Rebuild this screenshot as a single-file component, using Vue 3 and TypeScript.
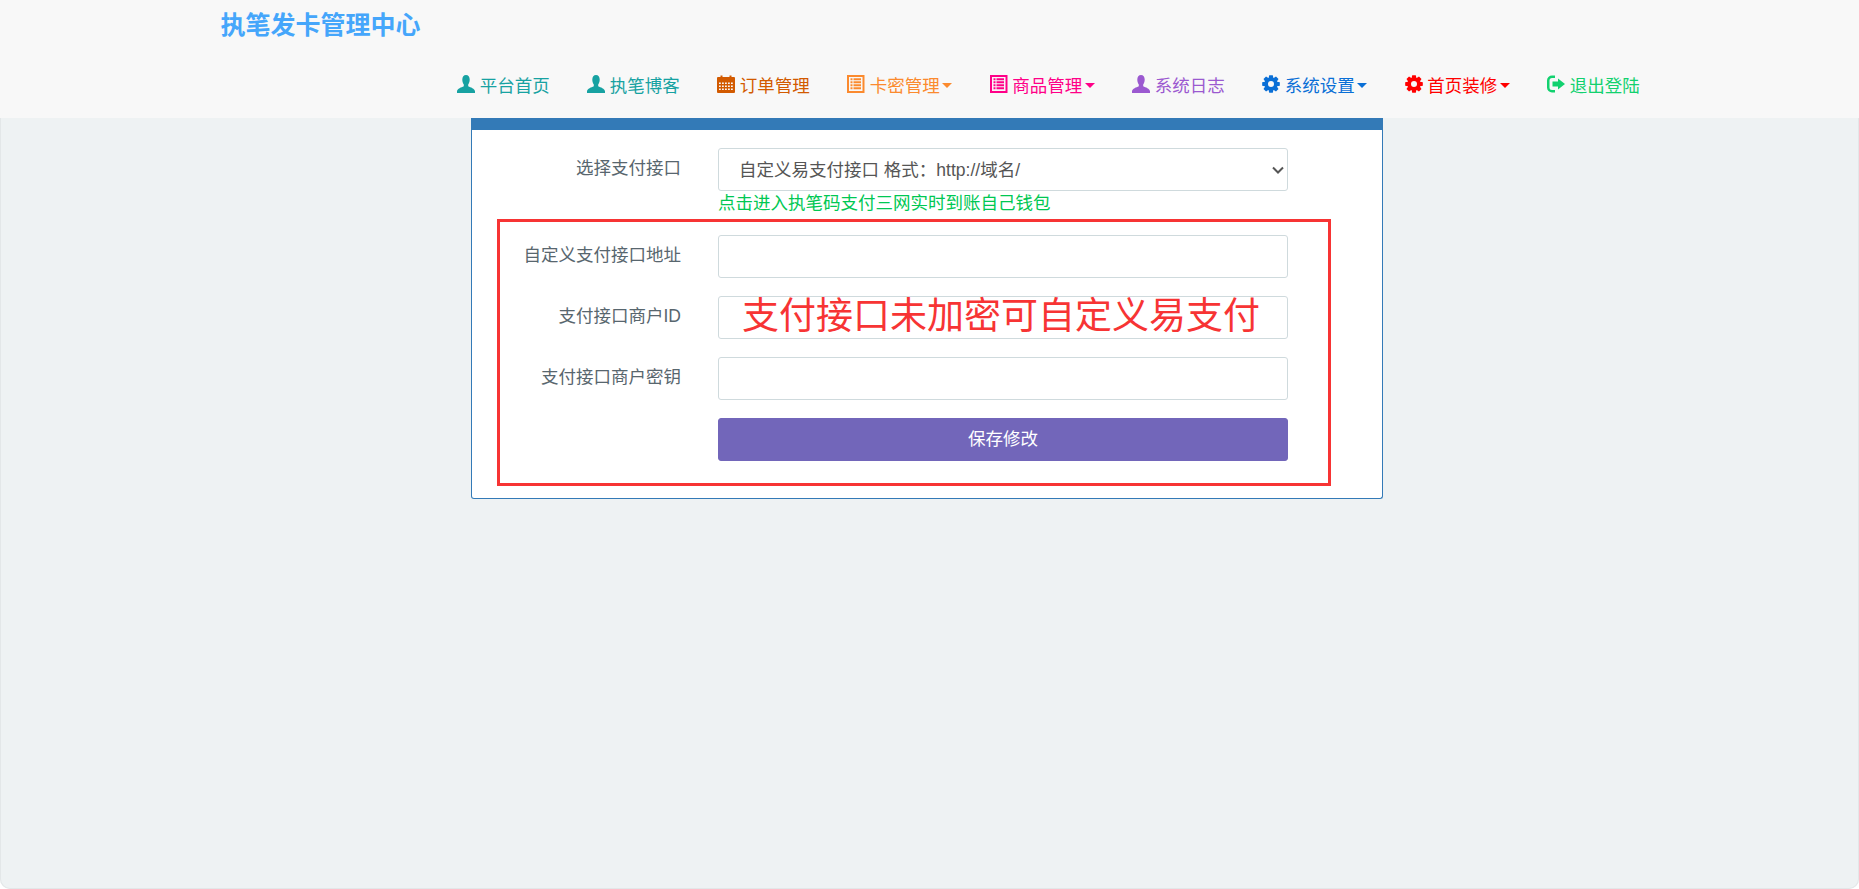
<template>
  <div class="page">
    <header class="navbar">
      <div class="navbar-inner">
        <div class="brand">执笔发卡管理中心</div>
        <ul class="nav">
          <li v-for="item in navItems" :key="item.label" class="nav-item" :style="{ color: item.color }">
            <svg class="nav-icon" viewBox="0 0 18 18" aria-hidden="true">
              <path :d="icons[item.icon]" fill="currentColor" fill-rule="evenodd" />
            </svg>
            <span class="nav-label">{{ item.label }}</span>
            <i v-if="item.caret" class="caret"></i>
          </li>
        </ul>
      </div>
    </header>

    <main class="panel">
      <div class="panel-head"></div>
      <form class="panel-body" @submit.prevent>
        <div class="form-row">
          <label class="form-label">选择支付接口</label>
          <div class="form-control-wrap">
            <div class="select-wrap">
              <select class="form-control">
                <option>自定义易支付接口 格式：http://域名/</option>
              </select>
              <svg class="select-arrow" viewBox="0 0 12 8" aria-hidden="true">
                <path d="M1 1.500l5 5 5-5" fill="none" stroke="currentColor" stroke-width="2" />
              </svg>
            </div>
            <div class="hint">点击进入执笔码支付三网实时到账自己钱包</div>
          </div>
        </div>
        <div v-for="field in fields" :key="field" class="form-row">
          <label class="form-label">{{ field }}</label>
          <div class="form-control-wrap">
            <input class="form-control" type="text" />
          </div>
        </div>
        <div class="form-row">
          <span class="form-label"></span>
          <div class="form-control-wrap">
            <button class="btn-save" type="submit">保存修改</button>
          </div>
        </div>
      </form>

      <!-- 截图上的红色标注 -->
      <div class="mark-box"></div>
      <div class="mark-text">支付接口未加密可自定义易支付</div>
    </main>
  </div>
</template>

<script setup lang="ts">
type IconName = 'user' | 'calendar' | 'list' | 'cog' | 'logout';

interface NavItem {
  label: string;
  icon: IconName;
  color: string;
  caret?: boolean;
}

// 生成小方块镂空
const cells = (xs: number[], ys: number[], w: number, h: number): string =>
  ys.flatMap(y => xs.map(x => `M${x} ${y}h${w}v${h}h-${w}z`)).join('');

// 齿轮外形
const gear = (): string => {
  const pts: string[] = [];
  const teeth = 8;
  for (let i = 0; i < teeth; i++) {
    const a = (i / teeth) * Math.PI * 2;
    const steps: [number, number][] = [[6.6, -0.36], [9, -0.2], [9, 0.2], [6.6, 0.36]];
    steps.forEach(([r, d]) => {
      pts.push(`${(9 + r * Math.cos(a + d)).toFixed(2)} ${(9 + r * Math.sin(a + d)).toFixed(2)}`);
    });
  }
  return `M${pts.join('L')}zM9 6a3 3 0 1 0 0 6a3 3 0 1 0 0-6z`;
};

const icons: Record<IconName, string> = {
  user: 'M9 0C6.700 0 5.300 2 5.300 4.600c0 2 .6 3.800 1.500 5V11.200C4.300 12.400.4 13.400 0 16.200V18h18v-1.800c-.4-2.800-4.300-3.800-6.800-5V9.600c.9-1.200 1.500-3 1.500-5C12.700 2 11.300 0 9 0z',
  calendar:
    'M1 2h2.500V.5h2V2h7V.5h2V2H17a1 1 0 0 1 1 1v14a1 1 0 0 1-1 1H1a1 1 0 0 1-1-1V3a1 1 0 0 1 1-1z' +
    cells([2, 5, 8, 11, 14], [7.500, 10.500, 13.500], 1.800, 1.400),
  list:
    'M0 0h17.500v18H0zM2 2v14h13.500V2z' +
    cells([3.500], [3.300, 6.300, 9.300, 12.300], 2, 2) +
    cells([6.500], [3.300, 6.300, 9.300, 12.300], 7.500, 2),
  cog: gear(),
  logout:
    'M8 .5H5A5 5 0 0 0 0 5.500v7a5 5 0 0 0 5 5h3V15H5a2.500 2.500 0 0 1-2.500-2.500v-7A2.500 2.500 0 0 1 5 3h3zM11 3.500l7 5.500-7 5.500V11.500H5.500v-5H11z'
};

const navItems: NavItem[] = [
  { label: '平台首页', icon: 'user', color: '#17a2a2' },
  { label: '执笔博客', icon: 'user', color: '#17a2a2' },
  { label: '订单管理', icon: 'calendar', color: '#d25a00' },
  { label: '卡密管理', icon: 'list', color: '#fb8a2e', caret: true },
  { label: '商品管理', icon: 'list', color: '#ff0088', caret: true },
  { label: '系统日志', icon: 'user', color: '#9b59d0' },
  { label: '系统设置', icon: 'cog', color: '#0a6fd6', caret: true },
  { label: '首页装修', icon: 'cog', color: '#ff0000', caret: true },
  { label: '退出登陆', icon: 'logout', color: '#12d16f' }
];

const fields = ['自定义支付接口地址', '支付接口商户ID', '支付接口商户密钥'];
</script>

<style>
html,
body {
  margin: 0;
  background: #fff;
}
</style>

<style scoped>
.page {
  height: 889px;
  overflow: hidden;
  background: #eef2f3;
  border-radius: 0 0 10px 10px;
  box-shadow: inset 0 0 0 1px #e3e7e8;
  color: #58666e;
  font-family: "Liberation Sans", "Noto Sans CJK SC", sans-serif;
  font-size: 17.5px;
}

.navbar {
  height: 118px;
  background: #f8f8f8;
}

.navbar-inner {
  box-sizing: border-box;
  width: 1462px;
  margin: 0 auto;
  padding-right: 2px;
}

.brand {
  height: 54px;
  padding-left: 22px;
  box-sizing: border-box;
  font-size: 25px;
  font-weight: 700;
  line-height: 50px;
  color: #45a6fb;
}

.nav {
  display: flex;
  justify-content: flex-end;
  height: 60px;
  margin: 0;
  padding: 0;
  list-style: none;
}

.nav-item {
  display: flex;
  align-items: center;
  padding: 0 18.75px;
}

.nav-icon {
  flex: none;
  width: 18px;
  height: 18px;
  margin-right: 4.5px;
}

.nav-label {
  white-space: nowrap;
}

.caret {
  width: 0;
  height: 0;
  margin: 2px 0 0 2.5px;
  border-top: 5.5px solid currentColor;
  border-left: 5px solid transparent;
  border-right: 5px solid transparent;
}

.panel {
  position: relative;
  box-sizing: border-box;
  width: 912px;
  height: 381px;
  margin-left: 471px;
  background: #fff;
  border: 1px solid #337ab7;
  border-top: 0;
  border-radius: 0 0 3px 3px;
}

.panel-head {
  height: 12px;
  margin: 0 -1px;
  background: #337ab7;
}

.panel-body {
  display: flex;
  flex-direction: column;
  gap: 18px;
  padding-top: 18px;
}

.form-row {
  display: grid;
  grid-template-columns: 209px 570px;
  column-gap: 37px;
}

.form-label {
  height: 43px;
  line-height: 41px;
  text-align: right;
}

.select-wrap {
  position: relative;
}

.select-wrap select {
  appearance: none;
}

.select-arrow {
  position: absolute;
  right: 4px;
  top: 18px;
  width: 12px;
  height: 8px;
  color: #555;
  pointer-events: none;
}

.form-control {
  display: block;
  box-sizing: border-box;
  width: 100%;
  height: 43px;
  padding: 0 20px;
  font: inherit;
  color: #555;
  background: #fff;
  border: 1px solid #cfdadd;
  border-radius: 3px;
  outline: none;
}

.hint {
  height: 26px;
  line-height: 25px;
  color: #00c853;
}

.btn-save {
  display: block;
  width: 100%;
  height: 43px;
  padding: 0 0 4px;
  font: inherit;
  color: #fff;
  background: #7266ba;
  border: 1px solid #7266ba;
  border-radius: 3px;
}

.mark-box {
  position: absolute;
  left: 25px;
  top: 101px;
  box-sizing: border-box;
  width: 834px;
  height: 267px;
  border: 3px solid #f73434;
  pointer-events: none;
}

.mark-text {
  position: absolute;
  left: 270px;
  top: 172px;
  font-size: 37px;
  line-height: 54px;
  color: #f73434;
  white-space: nowrap;
  pointer-events: none;
}
</style>
